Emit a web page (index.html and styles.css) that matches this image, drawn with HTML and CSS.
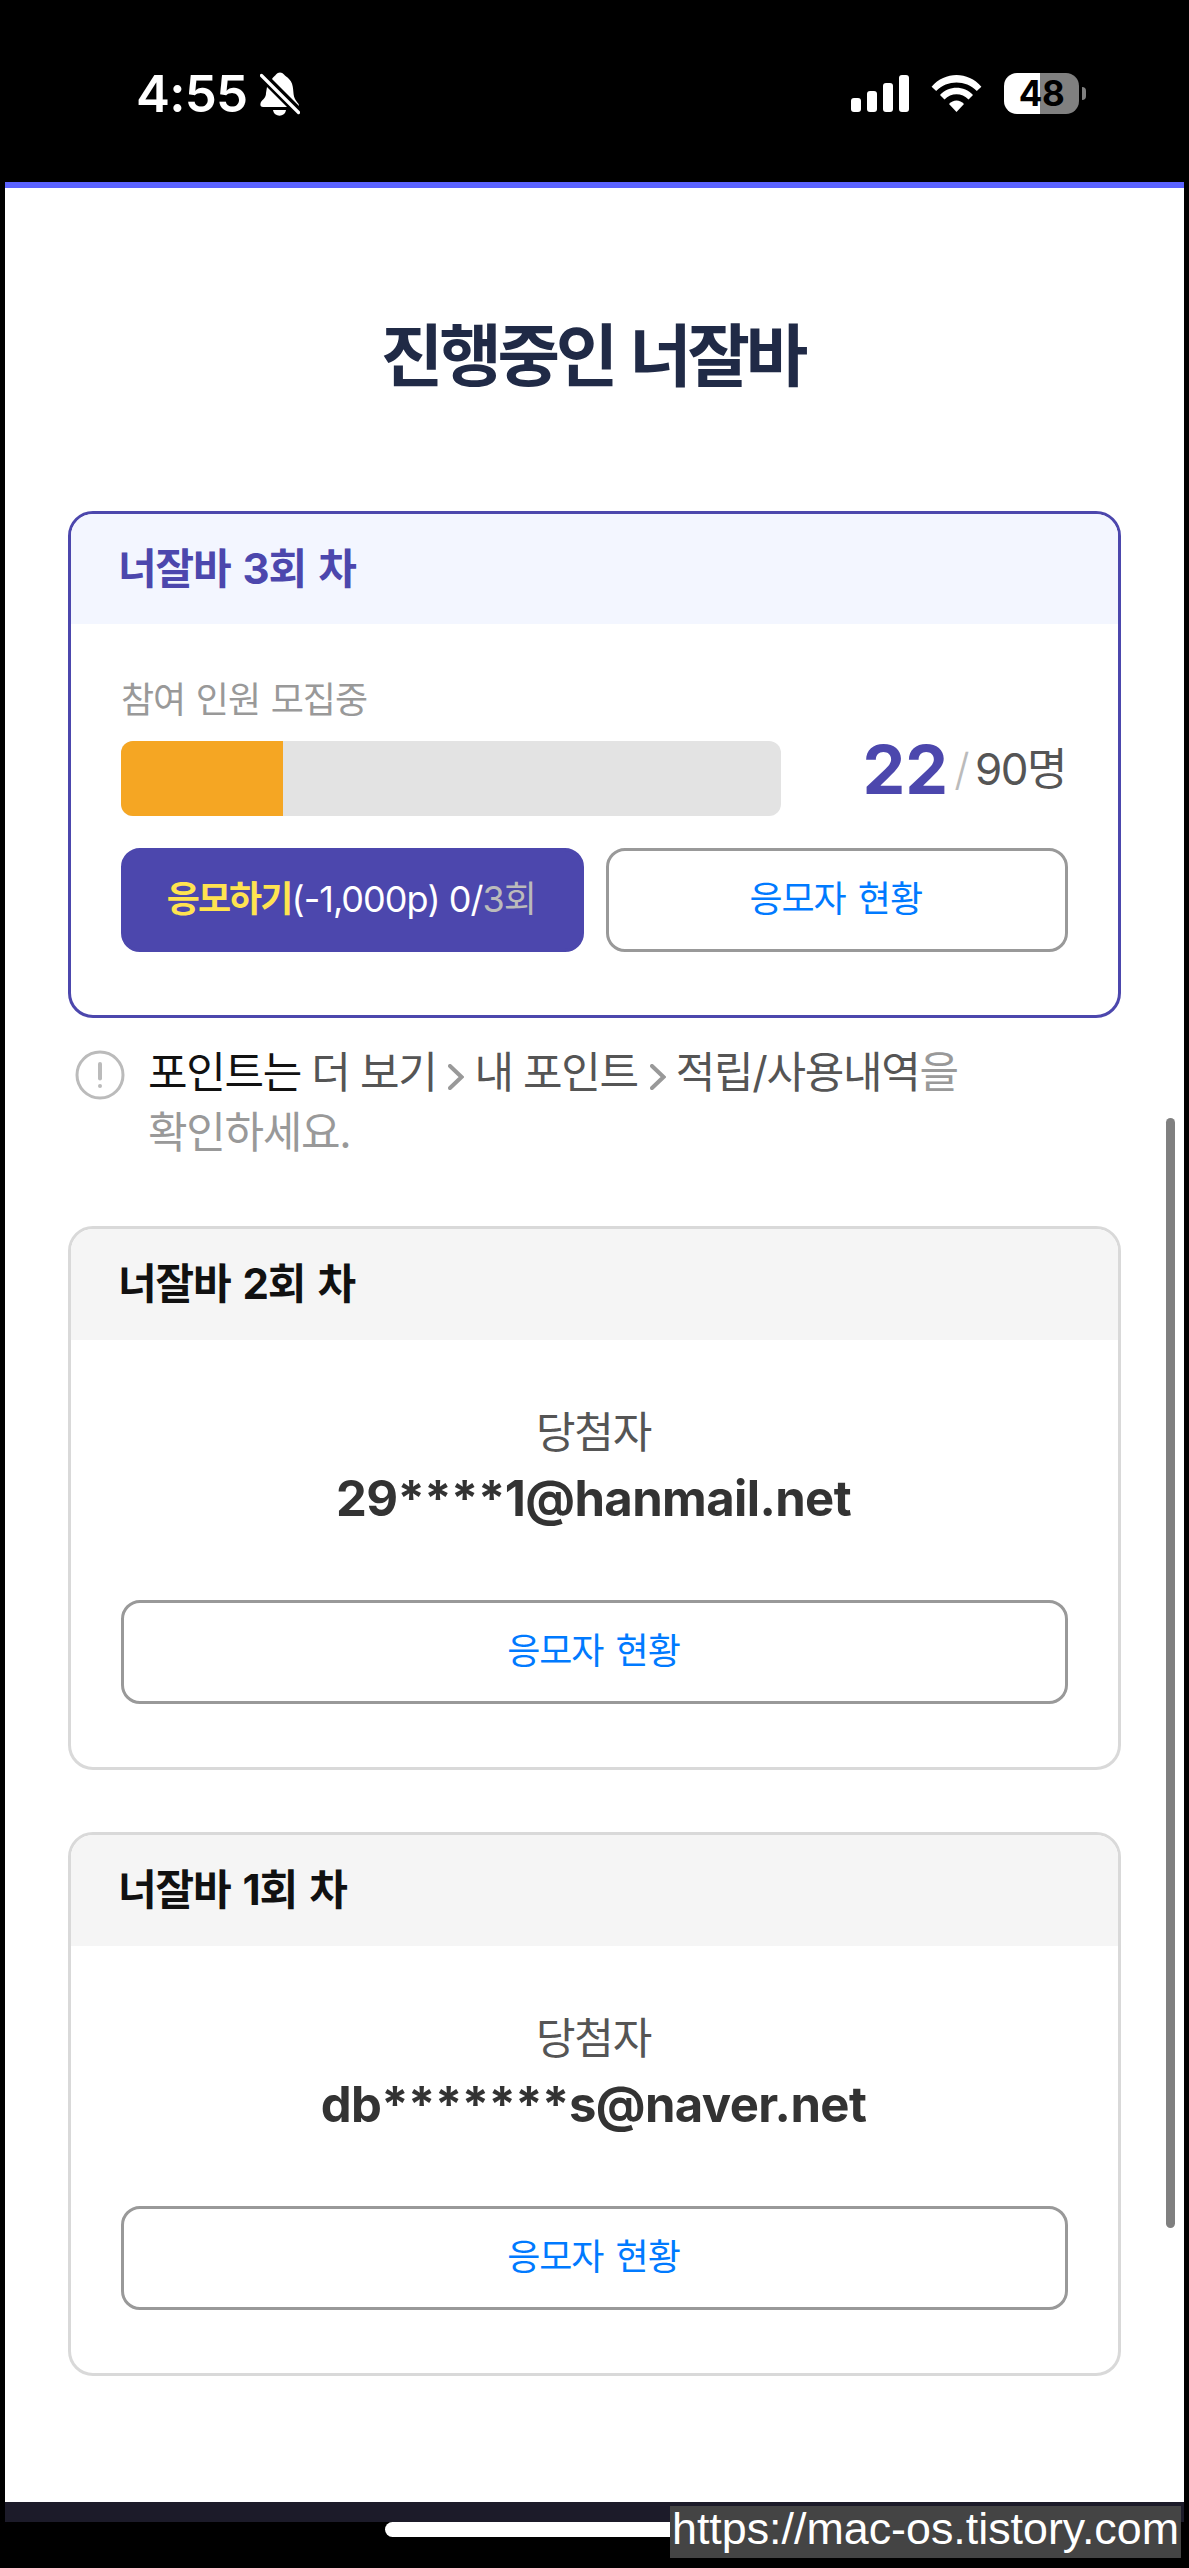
FILE: index.html
```html
<!DOCTYPE html>
<html lang="ko">
<head>
  <meta charset="UTF-8" />
  <meta name="viewport" content="width=device-width, initial-scale=1.0" />
  <title>진행중인 너잘바</title>
  <link rel="stylesheet" href="styles.css">
</head>
<body>
  <header class="status-bar">
    <div class="status-left">
      <span class="time">4:55</span>
      <svg class="bell" viewBox="0 0 40 44" fill="#fff">
        <path d="M12 7C14 4 15 4 16 2.5C18-.2 22-.2 24 2.5C25 4.2 27 4.5 29 7C35 13 32 21 35 27C37 31 39 31 39 34L12 7Z"/>
        <path d="M7 15L27 35H3C0 35 0 32 1 30C3 27 6 26 6 21Z"/>
        <path d="M13 38H26C25 45.500 14 45.500 13 38Z"/>
        <path d="M1.500 3.500L38.500 40.500" stroke="#fff" stroke-width="3.200" stroke-linecap="round"/>
      </svg>
    </div>
    <div class="status-right">
      <svg class="signal" viewBox="0 0 58 37" fill="#fff">
        <rect x="0" y="23" width="10" height="14" rx="3"/>
        <rect x="16" y="16" width="10" height="21" rx="3"/>
        <rect x="32" y="8" width="10" height="29" rx="3"/>
        <rect x="48" y="0" width="10" height="37" rx="3"/>
      </svg>
      <svg class="wifi" viewBox="0 0 51 37" fill="#fff">
        <path d="M.6 11.800C14-3.900 37-3.900 50.400 11.800L45.800 16C34.500 4.800 16.500 4.800 5.200 16Z"/>
        <path d="M9 20C18 10.300 33 10.300 42 20L37.500 24.500C31 17.500 20 17.500 13.500 24.500Z"/>
        <path d="M18 29C22 24.300 29 24.300 33 29L25.500 37Z"/>
      </svg>
      <div class="battery"><span>48</span></div>
      <div class="battery-cap"></div>
    </div>
  </header>

  <main class="page">
    <h1>진행중인 너잘바</h1>

    <section class="card current">
      <h2>너잘바 3회 차</h2>
      <div class="card-body">
        <p class="label">참여 인원 모집중</p>
        <div class="progress-row">
          <div class="progress"><div class="progress-fill" style="width:24.5%"></div></div>
          <div class="count"><strong>22</strong><i>/</i><span>90명</span></div>
        </div>
        <div class="buttons">
          <button class="btn primary"><b>응모하기</b>(-1,000p) 0/<em>3회</em></button>
          <button class="btn">응모자 현황</button>
        </div>
      </div>
    </section>

    <div class="notice">
      <svg class="info" viewBox="0 0 50 50" fill="none" stroke="#bbb" stroke-width="3">
        <circle cx="25" cy="25" r="23"/>
        <path d="M25 14V28.500" stroke-width="4" stroke-linecap="round"/>
        <circle cx="25" cy="36" r="2" fill="#bbb" stroke="none"/>
      </svg>
      <p>
        <b>포인트는</b> <span>더 보기</span><svg class="arrow" viewBox="0 0 16 26"><path d="M2 2L13.500 13L2 24"/></svg><span>내 포인트</span><svg class="arrow" viewBox="0 0 16 26"><path d="M2 2L13.500 13L2 24"/></svg><span>적립/사용내역</span>을<br>
        확인하세요.
      </p>
    </div>

    <section class="card">
      <h2>너잘바 2회 차</h2>
      <div class="card-body">
        <p class="winner">당첨자</p>
        <p class="email">29****1@hanmail.net</p>
        <button class="btn">응모자 현황</button>
      </div>
    </section>

    <section class="card">
      <h2>너잘바 1회 차</h2>
      <div class="card-body">
        <p class="winner">당첨자</p>
        <p class="email">db*******s@naver.net</p>
        <button class="btn">응모자 현황</button>
      </div>
    </section>

    <div class="scrollbar"></div>
  </main>

  <div class="tab-edge"></div>
  <div class="home-bar"></div>
  <div class="watermark">https://mac-os.tistory.com</div>
</body>
</html>
```

FILE: styles.css
```css
* {
  box-sizing: border-box;
}
body {
  margin: 0;
  width: 1189px;
  height: 2568px;
  padding: 0 5px;
  background: #000;
  font-family: Inter, "Noto Sans CJK KR", sans-serif;
  position: relative;
  overflow: hidden;
}
h1, h2, p {
  margin: 0;
}

/* status bar */
.status-bar {
  height: 182px;
  padding: 72px 98px 0 131px;
  display: flex;
  justify-content: space-between;
  align-items: flex-start;
  color: #fff;
}
.status-left, .status-right {
  display: flex;
  align-items: center;
  height: 43px;
}
.time {
  font-size: 51px;
  font-weight: 600;
  line-height: 43px;
  width: 124px;
  letter-spacing: -0.8px;
}
.bell {
  width: 40px;
  height: 44px;
}
.signal {
  width: 58px;
  height: 37px;
  margin-right: 22px;
}
.wifi {
  width: 51px;
  height: 37px;
  margin-right: 22px;
}
.battery {
  width: 75px;
  height: 41px;
  border-radius: 13px;
  background: linear-gradient(to right, #fff 36px, #808080 36px);
  color: #000;
  text-align: center;
  font-size: 35px;
  font-weight: 700;
  line-height: 41px;
  letter-spacing: -0.5px;
}
.battery-cap {
  width: 4px;
  height: 13px;
  margin-left: 3px;
  border-radius: 0 4px 4px 0;
  background: #808080;
}

/* page */
.page {
  position: relative;
  height: 2320px;
  padding: 0 63px;
  background: #fff;
  border-top: 6px solid #5b63ff;
}
h1 {
  padding: 128px 4px 115px 0;
  line-height: 80px;
  font-size: 68px;
  font-weight: 700;
  letter-spacing: -4.2px;
  word-spacing: 3px;
  text-align: center;
  color: #202a46;
}
.card {
  height: 544px;
  margin-bottom: 62px;
  border: 3px solid #d9d9d9;
  border-radius: 25px;
  overflow: hidden;
}
.card h2 {
  height: 111px;
  padding-left: 47px;
  line-height: 110px;
  font-size: 42px;
  font-weight: 700;
  letter-spacing: -1.2px;
  word-spacing: 3.5px;
  background: #f5f5f5;
  color: #111;
}
.card-body {
  padding: 0 50px;
}
.card.current {
  height: 507px;
  margin-bottom: 24px;
  border-color: #4c47ad;
}
.current h2 {
  height: 110px;
  background: #f3f6ff;
  color: #4c47ad;
}
.label {
  padding-top: 51px;
  line-height: 50px;
  margin-bottom: 16px;
  font-size: 36px;
  letter-spacing: -1px;
  word-spacing: 1.5px;
  color: #999;
}
.progress-row {
  display: flex;
  justify-content: space-between;
  align-items: center;
}
.progress {
  width: 660px;
  height: 75px;
  border-radius: 12px;
  background: #e3e3e3;
  overflow: hidden;
}
.progress-fill {
  height: 100%;
  background: #f5a623;
}
.count {
  display: flex;
  align-items: center;
  height: 75px;
  padding: 0 2px 19px 0;
  font-size: 44px;
  line-height: 56px;
  letter-spacing: -1.5px;
  color: #555;
}
.count strong {
  font-size: 68px;
  letter-spacing: 0;
  color: #4c47ad;
}
.count i {
  margin: 0 7px 0 6px;
  font-style: normal;
  font-weight: 300;
  color: #bbb;
}
.buttons {
  display: flex;
  gap: 22px;
  margin-top: 32px;
}
.btn {
  display: block;
  flex: 1;
  width: 100%;
  height: 104px;
  padding: 0 2px 2px 0;
  border: 3px solid #999;
  border-radius: 19px;
  background: #fff;
  font-family: inherit;
  font-size: 36px;
  line-height: 96px;
  letter-spacing: -1px;
  word-spacing: 3px;
  color: #007aff;
}
.btn.primary {
  border-color: #4c47ad;
  background: #4c47ad;
  color: #fff;
  letter-spacing: -1px;
  word-spacing: 0;
}
.btn b {
  font-weight: 600;
  letter-spacing: -1.9px;
  color: #ffe350;
}
.btn em {
  font-style: normal;
  color: #bbb;
}

/* notice */
.notice {
  display: flex;
  height: 184px;
  padding-left: 7px;
}
.info {
  width: 50px;
  height: 50px;
  margin: 8px 23px 0 0;
}
.notice p {
  font-size: 43px;
  line-height: 60px;
  letter-spacing: -1.3px;
  word-spacing: -0.5px;
  color: #999;
}
.notice b {
  font-weight: 400;
  color: #111;
}
.notice span {
  color: #555;
}
.arrow {
  width: 16px;
  height: 26px;
  margin: 0 10px 0 12px;
  vertical-align: -2px;
  fill: none;
  stroke: #999;
  stroke-width: 4;
  stroke-linecap: round;
}

/* winners */
.winner {
  padding: 62px 2px 0 0;
  line-height: 60px;
  font-size: 43px;
  letter-spacing: -1.3px;
  text-align: center;
  color: #555;
}
.email {
  padding-right: 2px;
  line-height: 74px;
  margin-bottom: 64px;
  font-size: 49px;
  font-weight: 700;
  letter-spacing: -0.6px;
  text-align: center;
  color: #333;
}

.scrollbar {
  position: absolute;
  top: 930px;
  right: 9px;
  width: 9px;
  height: 1110px;
  border-radius: 5px;
  background: #808080;
}
.tab-edge {
  height: 20px;
  background: #1c1b29;
}
.home-bar {
  width: 419px;
  height: 15px;
  margin: 0 auto;
  border-radius: 8px;
  background: #fff;
}
.watermark {
  position: absolute;
  right: 8px;
  bottom: 10px;
  width: 511px;
  height: 52px;
  line-height: 44px;
  background: #444;
  color: #fff;
  font-family: "Liberation Sans", Arial, sans-serif;
  font-size: 44.8px;
  text-align: center;
  white-space: nowrap;
}
```
